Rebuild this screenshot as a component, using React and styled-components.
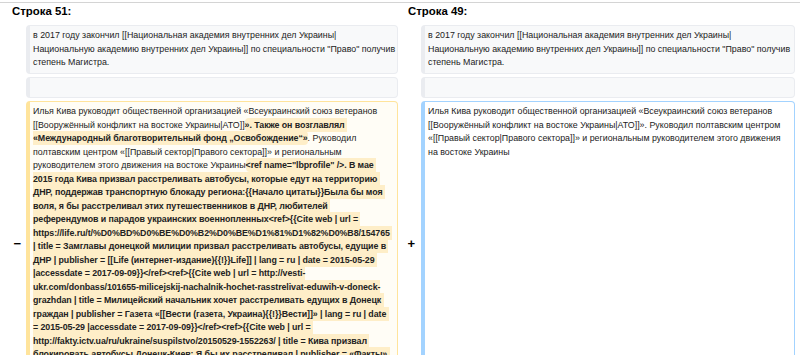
import styled, { createGlobalStyle } from "styled-components";

const GlobalStyle = createGlobalStyle`
  body {
    margin: 0;
    background: #fff;
    font-family: "Liberation Sans", Arial, sans-serif;
    color: #222;
    overflow: hidden;
  }
`;

const Page = styled.div`
  margin-top: 2px;
  border-top: 1px solid #d4d4d4;
  width: 800px;
`;

const DiffTable = styled.div`
  display: grid;
  grid-template-columns: 26px 372px 23px 374px;
  row-gap: 3px;
  align-items: stretch;
`;

const LineNo = styled.div`
  grid-column: span 2;
  padding: 1px 0 3px ${(p) => p.$indent}px;
  font-size: 11.4px;
  line-height: 15px;
  font-weight: bold;
  color: #000;
`;

const Marker = styled.div`
  display: flex;
  align-items: center;
  justify-content: flex-end;
  padding: 6px ${(p) => p.$pad}px 0 0;
  font-size: 13px;
  font-weight: bold;
  color: #000;
`;

const Cell = styled.div`
  font-size: 8.85px;
  line-height: 13.5px;
  padding: 3px ${(p) => (p.$kind === "context" ? 1 : 6)}px 3px 3px;
  border-style: solid;
  border-width: 1px 1px 1px 4px;
  border-radius: 4px;
  white-space: pre-wrap;
  word-wrap: break-word;
  min-height: 13.5px;
  color: #222;
  background: ${(p) =>
    p.$kind === "context" ? "#f8f9fa" : p.$kind === "deleted" ? "#fffdf6" : "#fff"};
  border-color: ${(p) =>
    p.$kind === "context" ? "#eaecf0" : p.$kind === "deleted" ? "#ffe49c" : "#a3d3ff"};
`;

const Change = styled.span`
  font-weight: bold;
  letter-spacing: -0.08px;
  background: #feeec8;
  border-radius: 4px;
  padding: 2px 0;
`;

const academy =
  'в 2017 году закончил [[Национальная академия внутренних дел Украины|Национальную академию внутренних дел Украины]] по специальности "Право" получив степень Магистра.';

const Spacer = () => <div />;

export default function App() {
  return (
    <>
      <GlobalStyle />
      <Page>
        <DiffTable>
          <LineNo $indent={12}>Строка 51:</LineNo>
          <LineNo $indent={10}>Строка 49:</LineNo>

          <Spacer />
          <Cell $kind="context">{academy}</Cell>
          <Spacer />
          <Cell $kind="context">{academy}</Cell>

          <Spacer />
          <Cell $kind="context">{"\u00a0"}</Cell>
          <Spacer />
          <Cell $kind="context">{"\u00a0"}</Cell>

          <Marker $pad={5}>−</Marker>
          <Cell $kind="deleted">
            Илья Кива руководит общественной организацией «Всеукраинский союз ветеранов [[Вооружённый конфликт на востоке Украины|АТО]]
            <Change>». Также он возглавлял «Международный благотворительный фонд „Освобождение“»</Change>
            . Руководил полтавским центром «[[Правый сектор|Правого сектора]]» и региональным руководителем этого движения на востоке Украины
            <Change>
              {'<ref name="lbprofile" />. В мае 2015 года Кива призвал расстреливать автобусы, которые едут на территорию ДНР, поддержав транспортную блокаду региона:{{Начало цитаты}}Была бы моя воля, я бы расстреливал этих путешественников в ДНР, любителей референдумов и парадов украинских военнопленных<ref>{{Cite web | url = https://life.ru/t/%D0%BD%D0%BE%D0%B2%D0%BE%D1%81%D1%82%D0%B8/154765 | title = Замглавы донецкой милиции призвал расстреливать автобусы, едущие в ДНР | publisher = [[Life (интернет-издание){{!}}Life]] | lang = ru | date = 2015-05-29 |accessdate = 2017-09-09}}</ref><ref>{{Cite web | url = http://vesti-ukr.com/donbass/101655-milicejskij-nachalnik-hochet-rasstrelivat-eduwih-v-doneck-grazhdan | title = Милицейский начальник хочет расстреливать едущих в Донецк граждан | publisher = Газета «[[Вести (газета, Украина){{!}}Вести]]» | lang = ru | date = 2015-05-29 |accessdate = 2017-09-09}}</ref><ref>{{Cite web | url = http://fakty.ictv.ua/ru/ukraine/suspilstvo/20150529-1552263/ | title = Кива призвал блокировать автобусы Донецк-Киев: Я бы их расстреливал | publisher = «Факты» | lang = ru | date = 2015-05-29 |accessdate = 2017-09-09}}</ref>{{Конец цитаты}}'}
            </Change>
          </Cell>
          <Marker $pad={6}>+</Marker>
          <Cell $kind="added">
            Илья Кива руководит общественной организацией «Всеукраинский союз ветеранов [[Вооружённый конфликт на востоке Украины|АТО]]». Руководил полтавским центром «[[Правый сектор|Правого сектора]]» и региональным руководителем этого движения на востоке Украины
          </Cell>
        </DiffTable>
      </Page>
    </>
  );
}
